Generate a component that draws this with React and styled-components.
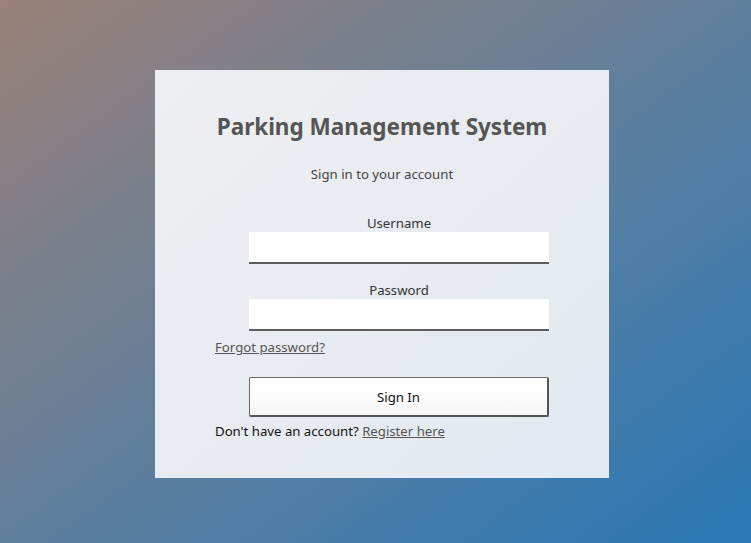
import React from "react";
import styled, { createGlobalStyle } from "styled-components";

const Global = createGlobalStyle`
  html, body { margin: 0; padding: 0; height: 100%; }
  body {
    font-family: "Noto Sans", "Open Sans", "Liberation Sans", sans-serif;
  }
  #root { height: 100%; }
`;

const Page = styled.div`
  width: 751px;
  height: 543px;
  background: linear-gradient(to bottom right, #9a8078 0%, #6e7f93 38%, #4f7ea6 65%, #2877b4 100%);
  display: flex;
  justify-content: center;
  align-items: flex-start;
  padding-top: 70px;
  box-sizing: border-box;
`;

const Card = styled.div`
  width: 454px;
  height: 408px;
  margin-left: 13px;
  box-sizing: border-box;
  padding: 40px 60px 0 60px;
  background: linear-gradient(to bottom right, #eeeff2 0%, #e8ebf0 50%, #e3eaf2 100%);
  display: flex;
  flex-direction: column;
`;

const Title = styled.h1`
  margin: 0;
  font-size: 22.5px;
  font-weight: 700;
  color: #555555;
  text-align: center;
  line-height: 34px;
  white-space: nowrap;
`;

const Subtitle = styled.p`
  margin: 20px 0 0;
  font-size: 13.2px;
  color: #444;
  text-align: center;
  line-height: 20px;
`;

const Field = styled.div`
  margin: ${(p) => p.$top}px 0 0 34px;
  width: 300px;
  display: flex;
  flex-direction: column;
  align-items: center;
`;

const Label = styled.label`
  font-size: 13.2px;
  color: #333;
  line-height: 18px;
`;

const Input = styled.input`
  width: 300px;
  height: 32px;
  box-sizing: border-box;
  border: none;
  border-bottom: 2px solid #5c5c5c;
  background: #fff;
  outline: none;
  padding: 0 8px;
  font-size: 14px;
`;

const Link = styled.a`
  color: #555;
  text-decoration: underline;
  font-size: 13.2px;
  cursor: pointer;
`;

const ForgotRow = styled.div`
  margin-top: 6px;
  line-height: 18px;
`;

const Button = styled.button`
  margin: 21px 0 0 34px;
  width: 300px;
  height: 40px;
  box-sizing: border-box;
  background: linear-gradient(#ffffff, #f7f7f7);
  border: 1px solid #6a6a6a;
  border-right: 2px solid #555;
  border-bottom: 2px solid #555;
  border-radius: 2px;
  font-family: inherit;
  font-size: 13.2px;
  color: #111;
  cursor: pointer;
`;

const Footer = styled.div`
  margin-top: 4px;
  font-size: 13.2px;
  color: #111;
  line-height: 20px;
`;

export default function App() {
  return (
    <>
      <Global />
      <Page>
        <Card>
          <Title>Parking Management System</Title>
          <Subtitle>Sign in to your account</Subtitle>
          <Field $top={30}>
            <Label>Username</Label>
            <Input type="text" />
          </Field>
          <Field $top={17}>
            <Label>Password</Label>
            <Input type="password" />
          </Field>
          <ForgotRow>
            <Link>Forgot password?</Link>
          </ForgotRow>
          <Button>Sign In</Button>
          <Footer>
            Don't have an account? <Link>Register here</Link>
          </Footer>
        </Card>
      </Page>
    </>
  );
}
